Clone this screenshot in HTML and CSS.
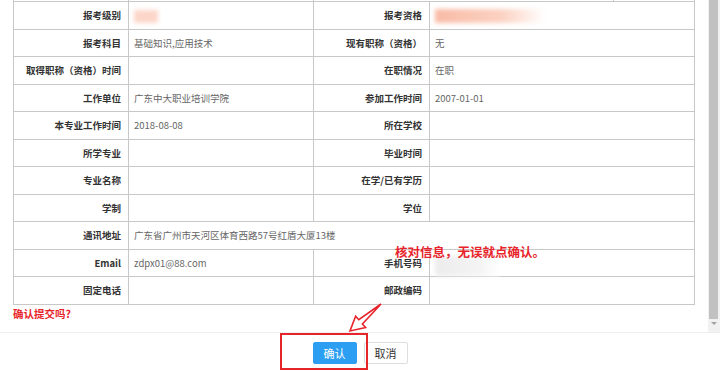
FILE: index.html
```html
<!DOCTYPE html>
<html lang="zh-CN">
<head>
    <meta charset="UTF-8">
    <meta name="viewport" content="width=device-width, initial-scale=1.0">
    <title>确认报名信息</title>
    <link rel="stylesheet" href="styles.css">
</head>
<body>
    <div class="dialog">
        <div class="dialog-body">
            <div class="scroll-area">
                <table class="form-table">
                    <colgroup>
                        <col class="c-label">
                        <col class="c-value">
                        <col class="c-label2">
                        <col class="c-value2">
                        <col class="c-photo">
                    </colgroup>
                    <!-- row above, scrolled out of view -->
                    <tr>
                        <th></th>
                        <td></td>
                        <td colspan="2"></td>
                        <td></td>
                    </tr>
                    <tr>
                        <th>报考级别</th>
                        <td><span class="blur blur-short"></span></td>
                        <th>报考资格</th>
                        <td colspan="2"><span class="blur blur-long"></span></td>
                    </tr>
                    <tr>
                        <th>报考科目</th>
                        <td>基础知识,应用技术</td>
                        <th>现有职称（资格）</th>
                        <td colspan="2">无</td>
                    </tr>
                    <tr>
                        <th>取得职称（资格）时间</th>
                        <td></td>
                        <th>在职情况</th>
                        <td colspan="2">在职</td>
                    </tr>
                    <tr>
                        <th>工作单位</th>
                        <td>广东中大职业培训学院</td>
                        <th>参加工作时间</th>
                        <td colspan="2">2007-01-01</td>
                    </tr>
                    <tr>
                        <th>本专业工作时间</th>
                        <td>2018-08-08</td>
                        <th>所在学校</th>
                        <td colspan="2"></td>
                    </tr>
                    <tr>
                        <th>所学专业</th>
                        <td></td>
                        <th>毕业时间</th>
                        <td colspan="2"></td>
                    </tr>
                    <tr>
                        <th>专业名称</th>
                        <td></td>
                        <th>在学/已有学历</th>
                        <td colspan="2"></td>
                    </tr>
                    <tr>
                        <th>学制</th>
                        <td></td>
                        <th>学位</th>
                        <td colspan="2"></td>
                    </tr>
                    <tr>
                        <th>通讯地址</th>
                        <td colspan="4">广东省广州市天河区体育西路57号红盾大厦13楼</td>
                    </tr>
                    <tr>
                        <th>Email</th>
                        <td>zdpx01@88.com</td>
                        <th>手机号码</th>
                        <td colspan="2"><span class="blur blur-phone"></span></td>
                    </tr>
                    <tr>
                        <th>固定电话</th>
                        <td></td>
                        <th>邮政编码</th>
                        <td colspan="2"></td>
                    </tr>
                </table>
                <p class="confirm-tip">确认提交吗?</p>
            </div>
            <div class="scrollbar">
                <div class="thumb"></div>
                <div class="arrow-down"></div>
            </div>
        </div>
        <div class="dialog-footer">
            <button class="btn btn-primary">确认</button>
            <button class="btn">取消</button>
        </div>
    </div>

    <!-- annotations drawn over the screenshot -->
    <div class="note">核对信息，无误就点确认。</div>
    <svg class="note-arrow" width="720" height="371" viewBox="0 0 720 371">
        <polygon points="381,304 362.4,323.9 365.6,327.6 350,331 355.6,316.2 358.8,319.7" fill="#fff" stroke="#e8242b" stroke-width="1.6" stroke-linejoin="miter"/>
    </svg>
    <div class="note-box"></div>
</body>
</html>
```

FILE: styles.css
```css
* {
    box-sizing: border-box;
}

body {
    margin: 0;
    width: 720px;
    height: 371px;
    overflow: hidden;
    background: #fff;
    font-family: "Noto Sans CJK SC", "Microsoft YaHei", sans-serif;
    color: #333;
    position: relative;
}

.dialog-body {
    display: flex;
    height: 333px;
    border-bottom: 1px solid #eee;
}

.scroll-area {
    flex: 1;
    overflow: hidden;
    padding: 0 14px 0 13px;
}

.form-table {
    width: 681px;
    table-layout: fixed;
    border-collapse: collapse;
    margin-top: -26.5px;
    font-size: 9.5px;
}

.c-label { width: 115px; }
.c-value { width: 185px; }
.c-label2 { width: 116px; }
.c-value2 { width: 184px; }
.c-photo { width: 81px; }

.form-table tr {
    height: 27.5px;
}

.form-table th,
.form-table td {
    border: 1px solid #c8c8c8;
    vertical-align: middle;
    white-space: nowrap;
    padding: 0;
}

.form-table th {
    text-align: right;
    font-weight: bold;
    color: #333;
    padding-right: 7px;
}

.form-table td {
    text-align: left;
    color: #666;
    padding-left: 5px;
}

.blur {
    display: inline-block;
    vertical-align: middle;
    filter: blur(2px);
}

.blur-short {
    width: 24px;
    height: 13px;
    background: #fcd6c9;
}

.blur-long {
    width: 110px;
    height: 14px;
    background: linear-gradient(to right, #f9bba6, #fbd1c2 60%, #fff);
}

.blur-phone {
    width: 64px;
    height: 20px;
    margin-top: 6px;
    background: linear-gradient(to right, #ececec, #f4f4f4 70%, #fff);
}

.confirm-tip {
    margin: 0;
    padding-top: 1px;
    font-size: 10.5px;
    line-height: 16px;
    font-weight: bold;
    color: #e8242b;
}

.scrollbar {
    width: 12px;
    background: #f1f1f1;
    padding: 0 2px 0 1px;
    display: flex;
    flex-direction: column;
    align-items: center;
}

.thumb {
    width: 100%;
    height: 319px;
    background: #c1c1c1;
}

.arrow-down {
    margin-top: 3px;
    width: 0;
    height: 0;
    border-left: 3px solid transparent;
    border-right: 3px solid transparent;
    border-top: 3px solid #a3a3a3;
}

.dialog-footer {
    display: flex;
    justify-content: center;
    gap: 7px;
    padding-top: 9px;
}

.btn {
    height: 22px;
    width: 44px;
    padding: 0;
    font-family: inherit;
    font-size: 11px;
    color: #333;
    background: #fff;
    border: 1px solid #dedede;
    border-radius: 2px;
}

.btn-primary {
    color: #fff;
    background: #2d9ff2;
    border-color: #2d9ff2;
}

.note {
    position: absolute;
    left: 395px;
    top: 244px;
    font-size: 12.5px;
    line-height: 15px;
    font-weight: bold;
    color: #e8242b;
    white-space: nowrap;
}

.note-arrow {
    position: absolute;
    left: 0;
    top: 0;
    pointer-events: none;
}

.note-box {
    position: absolute;
    left: 280px;
    top: 333px;
    width: 88px;
    height: 37px;
    border: 2px solid #e8242b;
}
```
